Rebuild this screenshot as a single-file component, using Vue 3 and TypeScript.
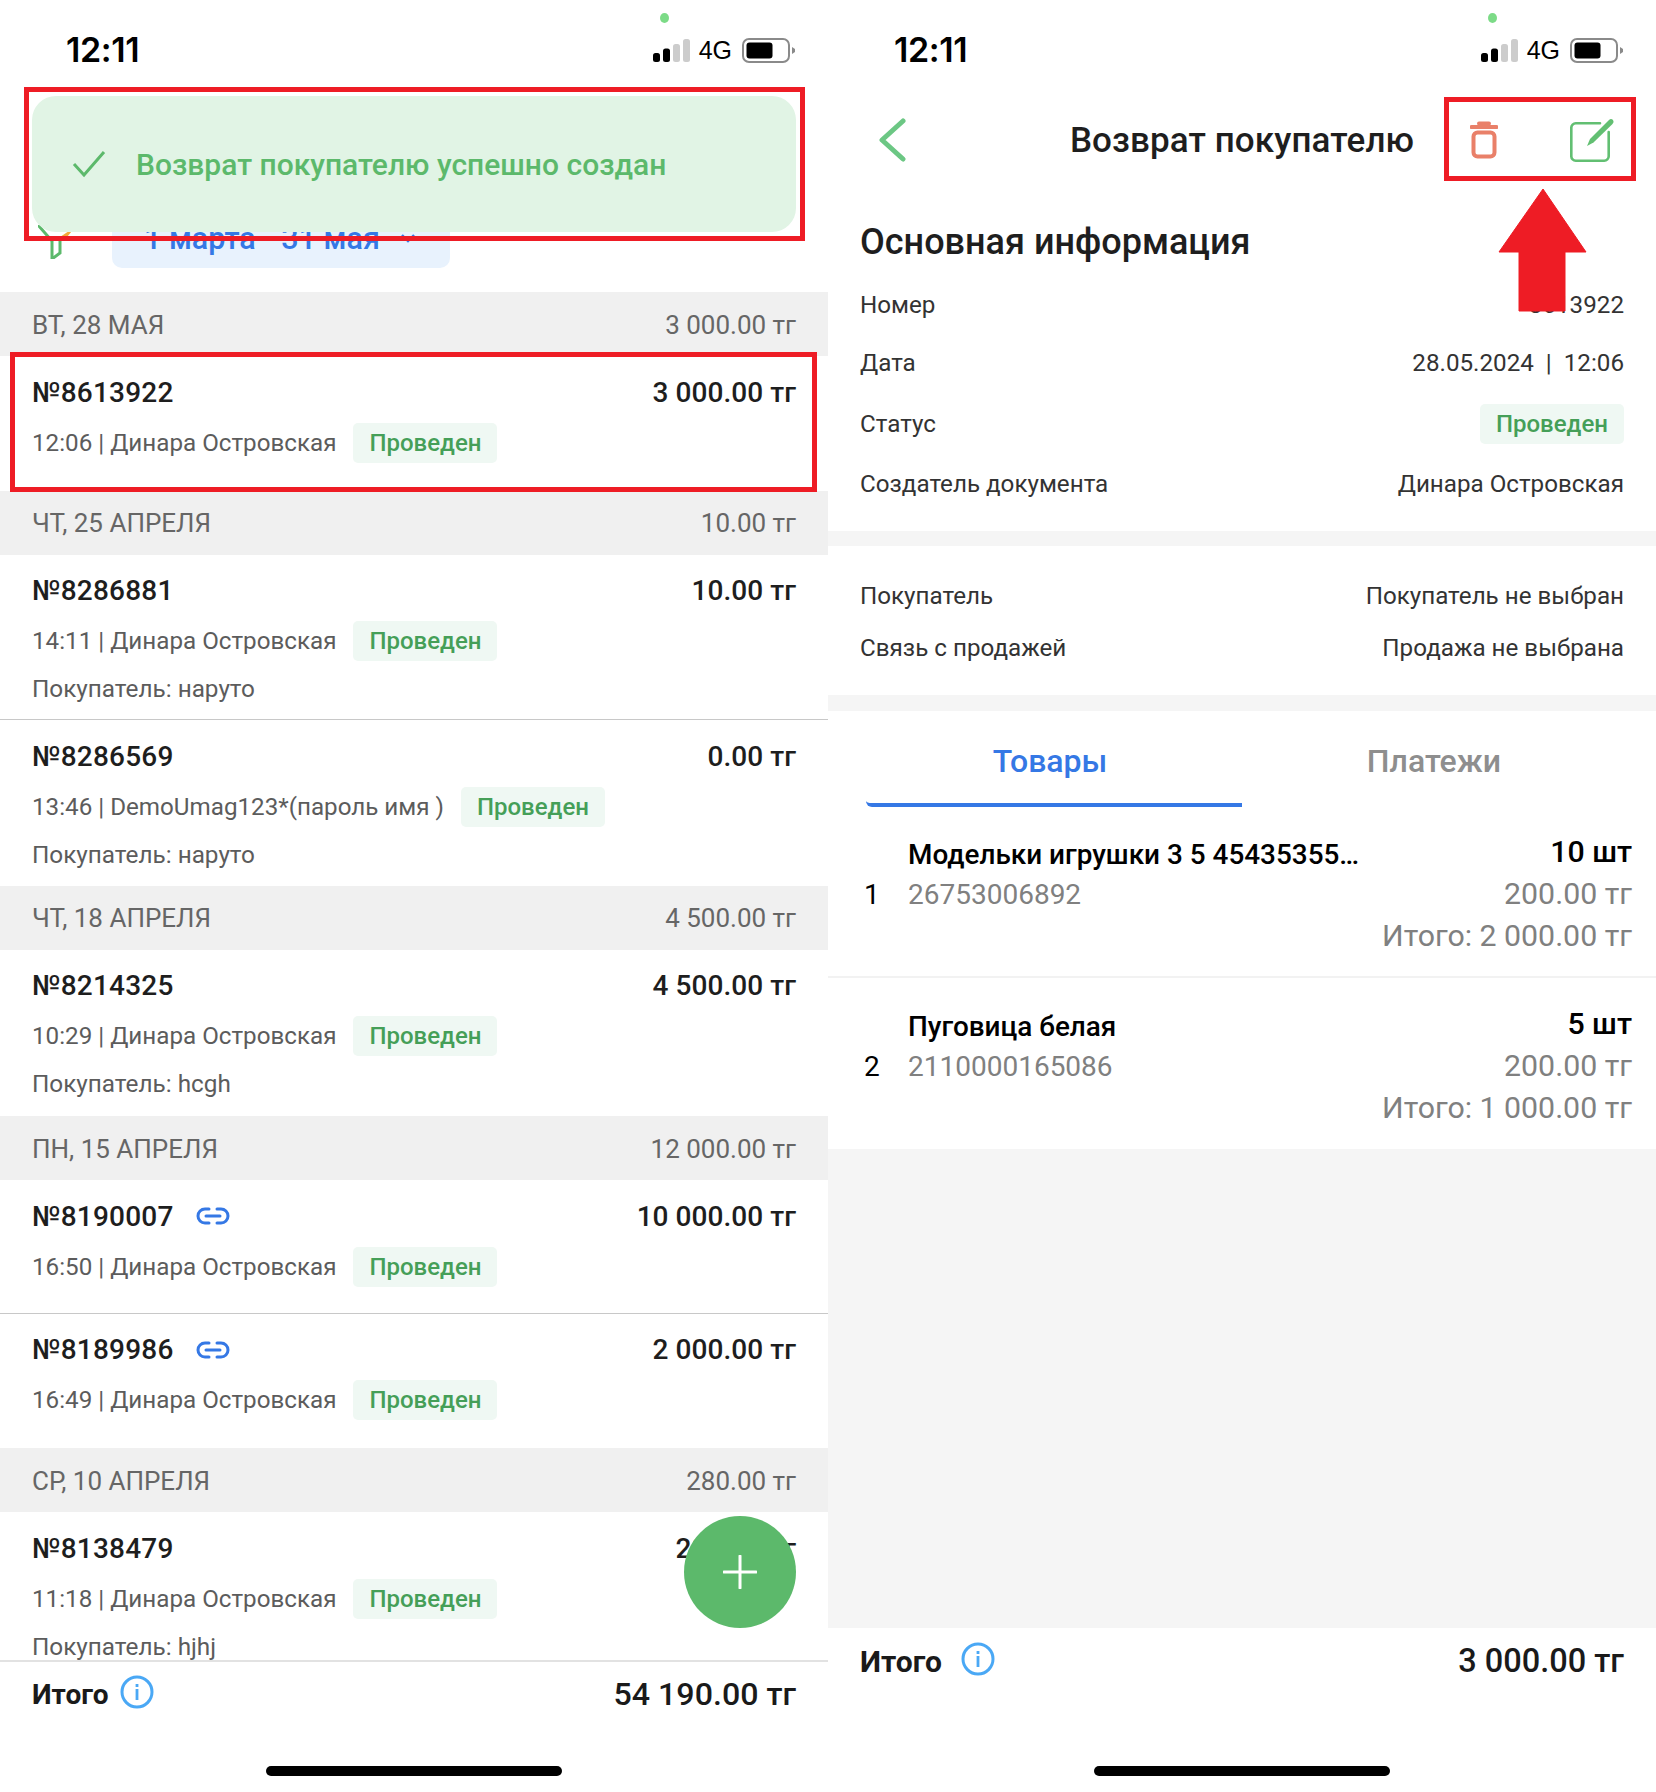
<script setup lang="ts">
interface Row { num: string; sum: string; meta: string; buyer?: string; link?: boolean; divided?: boolean; tight?: boolean }
interface Group { day: string; total: string; rows: Row[] }

const groups: Group[] = [
  { day: 'ВТ, 28 МАЯ', total: '3 000.00 тг', rows: [
    { num: '№8613922', sum: '3 000.00 тг', meta: '12:06 | Динара Островская' },
  ]},
  { day: 'ЧТ, 25 АПРЕЛЯ', total: '10.00 тг', rows: [
    { num: '№8286881', sum: '10.00 тг', meta: '14:11 | Динара Островская', buyer: 'Покупатель: наруто', divided: true },
    { num: '№8286569', sum: '0.00 тг', meta: '13:46 | DemoUmag123*(пароль имя )', buyer: 'Покупатель: наруто', tight: true },
  ]},
  { day: 'ЧТ, 18 АПРЕЛЯ', total: '4 500.00 тг', rows: [
    { num: '№8214325', sum: '4 500.00 тг', meta: '10:29 | Динара Островская', buyer: 'Покупатель: hcgh' },
  ]},
  { day: 'ПН, 15 АПРЕЛЯ', total: '12 000.00 тг', rows: [
    { num: '№8190007', sum: '10 000.00 тг', meta: '16:50 | Динара Островская', link: true, divided: true },
    { num: '№8189986', sum: '2 000.00 тг', meta: '16:49 | Динара Островская', link: true },
  ]},
  { day: 'СР, 10 АПРЕЛЯ', total: '280.00 тг', rows: [
    { num: '№8138479', sum: '280.00 тг', meta: '11:18 | Динара Островская', buyer: 'Покупатель: hjhj' },
  ]},
]

const info = [
  { label: 'Номер', value: '8613922' },
  { label: 'Дата', value: '28.05.2024  |  12:06' },
]

const items = [
  { n: 1, name: 'Модельки игрушки 3 5 45435355…', code: '26753006892', qty: '10 шт', price: '200.00 тг', total: 'Итого: 2 000.00 тг' },
  { n: 2, name: 'Пуговица белая', code: '2110000165086', qty: '5 шт', price: '200.00 тг', total: 'Итого: 1 000.00 тг' },
]
</script>

<template>
  <div class="screens">
    <!-- LEFT PHONE -->
    <section class="phone">
      <div class="status">
        <i class="dot"></i>
        <span class="time">12:11</span>
        <div class="sys">
          <svg width="37" height="23" viewBox="0 0 37 23"><rect x="0" y="14" width="7" height="9" rx="2.5" fill="#000"/><rect x="10" y="9.5" width="7" height="13.5" rx="2.5" fill="#000"/><rect x="20" y="5" width="7" height="18" rx="2.5" fill="#ccc"/><rect x="30" y="0" width="7" height="23" rx="2.5" fill="#ccc"/></svg>
          <span class="net">4G</span>
          <svg class="batt" width="53" height="25" viewBox="0 0 53 25"><rect x="1" y="1" width="46" height="23" rx="6" fill="none" stroke="#8a8a8a" stroke-width="2"/><rect x="4.5" y="4.5" width="26" height="16" rx="3" fill="#000"/><path d="M50 9 L53 11 V14 L50 16Z" fill="#8a8a8a"/></svg>
        </div>
      </div>
      <div class="filter">
        <svg class="logo" width="40" height="34" viewBox="0 0 40 34"><path d="M0 0 L14 16 V34 L22 28 V14" fill="none" stroke="#5cb96b" stroke-width="3"/><path d="M22 12 L37 2 L26 16Z" fill="#f2a93b"/></svg>
        <div class="pill"><span>1 марта - 31 мая</span><svg width="16" height="10" viewBox="0 0 16 10"><path d="M2 2 L8 8 L14 2" fill="none" stroke="#3578e5" stroke-width="2.4"/></svg></div>
      </div>

      <div class="list">
        <template v-for="g in groups" :key="g.day">
          <div class="gh"><span>{{ g.day }}</span><span>{{ g.total }}</span></div>
          <div v-for="r in g.rows" :key="r.num" class="row" :class="{ divided: r.divided, nobuyer: !r.buyer, tight: r.tight }">
            <div class="line1">
              <span class="num">{{ r.num }}</span>
              <svg v-if="r.link" class="link" width="34" height="18" viewBox="0 0 34 18"><path d="M13 2 H9 a7 7 0 0 0 0 14 H13 M21 2 H25 a7 7 0 0 1 0 14 H21 M10 9 H24" fill="none" stroke="#3578e5" stroke-width="3" stroke-linecap="round"/></svg>
              <span class="sum">{{ r.sum }}</span>
            </div>
            <div class="line2"><span class="meta">{{ r.meta }}</span><span class="badge">Проведен</span></div>
            <div v-if="r.buyer" class="buyer">{{ r.buyer }}</div>
          </div>
        </template>
      </div>

      <div class="foot foot-left">
        <div class="foot-row">
          <span class="it">Итого</span>
          <svg class="inf" width="34" height="34" viewBox="0 0 34 34"><circle cx="17" cy="17" r="15" fill="none" stroke="#4aa8f5" stroke-width="3"/><rect x="15.6" y="14" width="2.8" height="11" fill="#4aa8f5"/><rect x="15.6" y="9" width="2.8" height="3" fill="#4aa8f5"/></svg>
          <span class="fsum">54 190.00 тг</span>
        </div>
        <div class="home"></div>
      </div>

      <div class="toast">
        <svg width="34" height="28" viewBox="0 0 34 28"><path d="M2 14 L12 25 L32 2" fill="none" stroke="#5cb96b" stroke-width="3"/></svg>
        <span>Возврат покупателю успешно создан</span>
      </div>
      <div class="mark mark-toast"></div>
      <div class="mark mark-row"></div>
      <button class="fab"><svg width="34" height="34" viewBox="0 0 34 34"><path d="M17 1 V33 M1 17 H33" stroke="#fff" stroke-width="3" stroke-linecap="round"/></svg></button>
    </section>

    <!-- RIGHT PHONE -->
    <section class="phone">
      <div class="status">
        <i class="dot"></i>
        <span class="time">12:11</span>
        <div class="sys">
          <svg width="37" height="23" viewBox="0 0 37 23"><rect x="0" y="14" width="7" height="9" rx="2.5" fill="#000"/><rect x="10" y="9.5" width="7" height="13.5" rx="2.5" fill="#000"/><rect x="20" y="5" width="7" height="18" rx="2.5" fill="#ccc"/><rect x="30" y="0" width="7" height="23" rx="2.5" fill="#ccc"/></svg>
          <span class="net">4G</span>
          <svg class="batt" width="53" height="25" viewBox="0 0 53 25"><rect x="1" y="1" width="46" height="23" rx="6" fill="none" stroke="#8a8a8a" stroke-width="2"/><rect x="4.5" y="4.5" width="26" height="16" rx="3" fill="#000"/><path d="M50 9 L53 11 V14 L50 16Z" fill="#8a8a8a"/></svg>
        </div>
      </div>
      <header class="nav">
        <svg class="back" width="28" height="44" viewBox="0 0 28 44"><path d="M25 3 L4 22 L25 41" fill="none" stroke="#6cc784" stroke-width="5" stroke-linecap="round" stroke-linejoin="round"/></svg>
        <h1>Возврат покупателю</h1>
        <div class="acts">
          <svg width="28" height="38" viewBox="0 0 28 38"><path d="M1.5 6 H26.5" stroke="#e98069" stroke-width="4" stroke-linecap="round"/><path d="M9 2.5 H19" stroke="#e98069" stroke-width="4" stroke-linecap="round"/><rect x="3.5" y="11.5" width="21" height="24" rx="4" fill="none" stroke="#e98069" stroke-width="4"/></svg>
          <svg class="edit" width="46" height="46" viewBox="0 0 46 46"><path d="M30 6.3 H6 a4.5 4.5 0 0 0 -4.7 4.7 V39 a4.5 4.5 0 0 0 4.7 4.7 H34 a4.5 4.5 0 0 0 4.7 -4.7 V15" fill="none" stroke="#62bf72" stroke-width="2.6" stroke-linecap="round"/><path d="M17 29 L20 22 L39 3 Q41 1 43 3 Q44.5 5 42.5 7 L23.5 25.5Z" fill="#62bf72"/></svg>
        </div>
      </header>

      <div class="block block-a">
        <h2>Основная информация</h2>
        <div v-for="i in info" :key="i.label" class="kv"><span>{{ i.label }}</span><span class="pre">{{ i.value }}</span></div>
        <div class="kv kv-status"><span>Статус</span><span class="badge">Проведен</span></div>
        <div class="kv"><span>Создатель документа</span><span>Динара Островская</span></div>
      </div>
      <div class="block block-b">
        <div class="kv kv-b"><span>Покупатель</span><span>Покупатель не выбран</span></div>
        <div class="kv kv-b"><span>Связь с продажей</span><span>Продажа не выбрана</span></div>
      </div>
      <div class="block-c">
        <div class="tabs">
          <div class="tab on">Товары</div>
          <div class="tab">Платежи</div>
        </div>
        <div v-for="it in items" :key="it.n" class="item">
          <span class="idx">{{ it.n }}</span>
          <div class="mid"><div class="name">{{ it.name }}</div><div class="code">{{ it.code }}</div></div>
          <div class="right"><div class="qty">{{ it.qty }}</div><div>{{ it.price }}</div><div>{{ it.total }}</div></div>
        </div>
      </div>
      <div class="fill"></div>
      <div class="foot foot-right">
        <div class="foot-row">
          <span class="it">Итого</span>
          <svg class="inf inf-r" width="34" height="34" viewBox="0 0 34 34"><circle cx="17" cy="17" r="15" fill="none" stroke="#4aa8f5" stroke-width="3"/><rect x="15.6" y="14" width="2.8" height="11" fill="#4aa8f5"/><rect x="15.6" y="9" width="2.8" height="3" fill="#4aa8f5"/></svg>
          <span class="fsum">3 000.00 тг</span>
        </div>
        <div class="home"></div>
      </div>

      <div class="mark mark-acts"></div>
      <svg class="arrow" width="90" height="124" viewBox="0 0 90 124"><path d="M45 1 L88 64 H67 V123 H21 V64 H1 Z" fill="#ee1c25" stroke="#ee1c25" stroke-width="1" stroke-linejoin="round"/></svg>
    </section>
  </div>
</template>

<style scoped>
.screens { display: grid; grid-template-columns: 828px 828px; width: 1656px; height: 1792px; font-family: Roboto, "Noto Sans", sans-serif; background: #fff; overflow: hidden; }
.phone { position: relative; display: flex; flex-direction: column; height: 1792px; overflow: hidden; background: #fff; }

.status { position: relative; height: 87px; flex: none; display: flex; align-items: flex-start; justify-content: space-between; padding: 30px 33px 0 66px; box-sizing: border-box; }
.dot { position: absolute; left: 660px; top: 13px; width: 9px; height: 10px; border-radius: 50%; background: #7cdb87; }
.time { font-family: Inter, Roboto, sans-serif; font-weight: 600; font-size: 34px; line-height: 40px; color: #000; letter-spacing: -0.4px; }
.sys { display: flex; align-items: center; gap: 9px; padding-top: 7px; margin-left: auto; }
.net { font-family: "Liberation Sans", sans-serif; font-size: 25px; line-height: 26px; color: #000; }
.batt { margin-left: 1px; }

.filter { height: 205px; flex: none; box-sizing: border-box; padding: 113px 0 0 38px; display: flex; align-items: flex-start; }
.logo { margin-top: 25px; }
.pill { margin-left: 34px; width: 338px; height: 68px; flex: none; box-sizing: border-box; padding: 8px 0 0 32px; gap: 20px; display: flex; align-items: center; background: #e8f2fd; border-radius: 10px; color: #3578e5; font-size: 30.5px; font-weight: 500; }

.list { flex: 1; min-height: 0; overflow: hidden; }
.gh { height: 64px; box-sizing: border-box; padding: 0 32px; display: flex; align-items: center; justify-content: space-between; background: #f0f0f0; color: #666; font-size: 26px; }
.gh span { position: relative; top: 0.5px; }
.row { box-sizing: border-box; padding: 18px 32px 14px; background: #fff; }
.row.tight { padding-bottom: 13px; }
.row.nobuyer { padding-bottom: 28px; }
.row.divided { border-bottom: 1px solid #c8c8c8; padding-bottom: 12px; }
.row.divided.nobuyer { padding-bottom: 26px; }
.line1 { display: flex; align-items: center; height: 36px; }
.num { font-size: 28px; font-weight: 500; color: #1e1e1e; letter-spacing: 0.2px; }
.link { margin-left: 22px; }
.sum { margin-left: auto; font-size: 28px; font-weight: 500; color: #1e1e1e; letter-spacing: 0.05px; }
.line2 { display: flex; align-items: center; margin-top: 12.5px; }
.meta { font-size: 24.2px; color: #5c5c5c; }
.badge { display: inline-flex; align-items: center; height: 40px; padding: 0 16px; background: #eff8f3; border-radius: 5px; color: #459f58; font-size: 24px; font-weight: 500; }
.line2 .badge { margin-left: 17px; }
.buyer { margin-top: 10px; height: 36px; line-height: 36px; font-size: 24.3px; color: #5c5c5c; }

.foot { flex: none; background: #fff; display: flex; flex-direction: column; box-sizing: border-box; }
.foot-left { height: 132px; border-top: 2px solid #e2e2e2; padding: 13px 32px 16px; }
.foot-right { height: 164px; padding: 14px 32px 16px; }
.foot-row { display: flex; align-items: center; height: 38px; }
.it { font-size: 28px; font-weight: 700; color: #1a1a1a; }
.foot-right .it { font-size: 30px; }
.inf { margin-left: 11px; margin-top: -4px; }
.inf-r { margin-left: 19px; }
.fsum { margin-left: auto; font-size: 32.2px; font-weight: 500; color: #1a1a1a; }
.foot-right .fsum { font-size: 32.5px; }
.home { margin: auto auto 0; width: 296px; height: 10px; border-radius: 5px; background: #000; }

.toast { position: absolute; left: 32px; top: 96px; width: 764px; height: 136px; border-radius: 24px; background: #e1f4e5; display: flex; align-items: center; gap: 30px; padding-left: 40px; box-sizing: border-box; color: #5cb96b; font-size: 30px; font-weight: 500; }
.mark { position: absolute; box-sizing: border-box; border: 5.5px solid #ee1c25; }
.mark-toast { left: 24px; top: 87px; width: 781px; height: 154px; }
.mark-row { left: 10px; top: 352px; width: 807px; height: 140px; }
.mark-acts { left: 616px; top: 97px; width: 192px; height: 84px; }
.fab { position: absolute; left: 684px; top: 1516px; width: 112px; height: 112px; border: 0; padding: 0; border-radius: 50%; background: #5cb96b; display: flex; align-items: center; justify-content: center; }
.arrow { position: absolute; left: 670px; top: 188px; }

.nav { height: 106px; flex: none; position: relative; display: flex; align-items: center; justify-content: center; }
.back { position: absolute; left: 50px; top: 31px; }
.nav h1 { margin: 0; padding-top: 1px; font-size: 35px; font-weight: 500; color: #1e1e1e; letter-spacing: 0.1px; }
.acts { position: absolute; left: 642px; top: 34px; display: flex; align-items: flex-start; gap: 72px; }
.edit { margin-top: -4px; }

.block-a { flex: none; padding: 25px 32px 18px; border-bottom: 15px solid #f5f5f5; }
.block-a h2 { margin: 0 0 10px; height: 48px; line-height: 48px; font-size: 36px; font-weight: 500; color: #1e1e1e; }
.kv { display: flex; align-items: center; justify-content: space-between; height: 58px; font-size: 24.2px; color: #333; }
.kv-status { height: 63px; }
.kv .pre { white-space: pre; }
.block-b { flex: none; padding: 24px 32px 21px; border-bottom: 16px solid #f5f5f5; }
.kv-b { height: 52px; }
.block-c { flex: none; }
.tabs { height: 96px; display: grid; grid-template-columns: 376px 1fr; padding-left: 38px; box-sizing: border-box; }
.tab { display: flex; align-items: center; justify-content: center; font-size: 32px; font-weight: 500; color: #8e8e8e; height: 96px; box-sizing: border-box; padding-top: 4px; margin-left: 18px; margin-right: 48px; }
.tab.on { color: #3578e5; border-bottom: 4px solid #3578e5; border-bottom-left-radius: 6px; padding-top: 7px; padding-right: 8px; margin: 0; }
.item { display: grid; grid-template-columns: 44px 1fr auto; padding: 27px 24px 21px 36px; height: 171px; box-sizing: border-box; border-bottom: 2px solid #f2f2f2; align-items: start; }
.item:last-child { border-bottom: 0; height: 171px; padding-top: 28px; }
.idx { font-size: 28px; line-height: 42px; margin-top: 40px; color: #000; }
.name { font-size: 27.9px; font-weight: 500; line-height: 42px; color: #000; }
.code { font-size: 28px; line-height: 38px; color: #808080; }
.right { text-align: right; font-size: 30.3px; line-height: 42px; color: #808080; margin-top: 1px; }
.qty { font-weight: 500; color: #000; margin-top: -4px; }
.fill { flex: 1; background: #f5f5f5; }
</style>
